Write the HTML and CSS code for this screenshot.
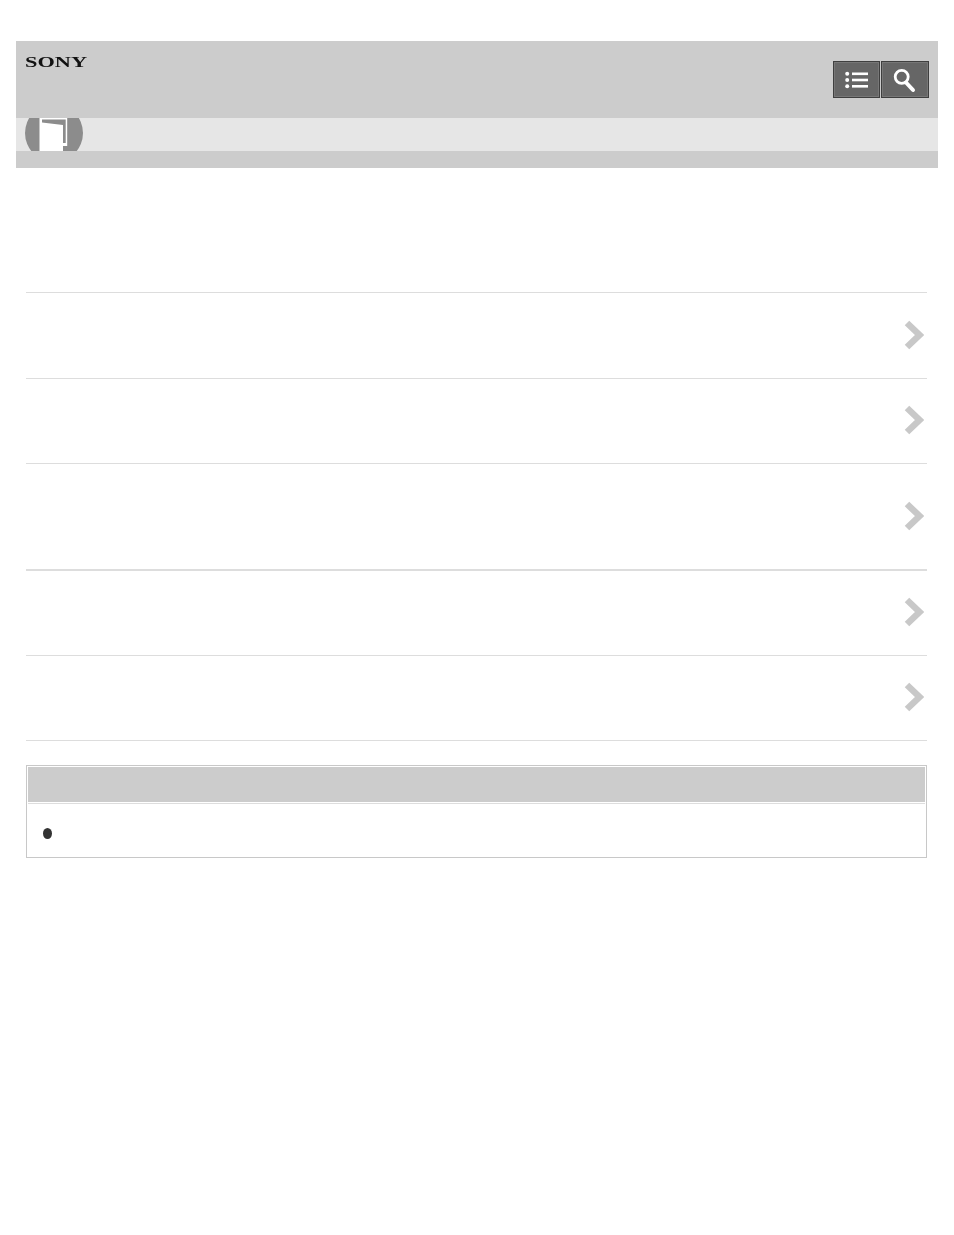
FILE: index.html
```html
<!DOCTYPE html>
<html lang="en">
<head>
<meta charset="utf-8">
<title>Help Guide</title>
<link rel="stylesheet" href="styles.css">
</head>
<body>
<header class="site-header">
  <div class="top-bar">
    <span class="logo">SONY</span>
    <div class="tools">
      <button class="tool" aria-label="Contents">
        <svg width="24" height="18" viewBox="0 0 24 18"><g fill="#fff"><circle cx="2.200" cy="2.800" r="2"/><circle cx="2.200" cy="9" r="2"/><circle cx="2.200" cy="15.300" r="2"/><rect x="7" y="1.500" width="16" height="2.600"/><rect x="7" y="7.700" width="16" height="2.600"/><rect x="7" y="14" width="16" height="2.600"/></g></svg>
      </button>
      <button class="tool tool-wide" aria-label="Search">
        <svg width="24" height="26" viewBox="0 0 24 26"><circle cx="8.700" cy="9.800" r="6.500" fill="none" stroke="#fff" stroke-width="2.800"/><path d="M13 15.500l7 7.500" stroke="#fff" stroke-width="4" stroke-linecap="round"/></svg>
      </button>
    </div>
  </div>
  <div class="title-strip">
    <svg class="badge" width="58" height="33" viewBox="0 0 58 33"><circle cx="29" cy="15" r="29" fill="#8c8c8c"/><path d="M14.500 0H42.200V28H38V33H14.500Z" fill="#fff"/><path d="M17 1.500H40.700V25H38V7L17 4.500Z" fill="#8c8c8c"/></svg>
  </div>
  <div class="bottom-bar"></div>
</header>

<main class="content">
  <ul class="links">
    <li class="row row-first"><svg class="chev" width="20" height="30" viewBox="0 0 20 30"><path d="M3 3l12.500 12L3 27" fill="none" stroke="#c8c8c8" stroke-width="6.500"/></svg></li>
    <li class="row"><svg class="chev" width="20" height="30" viewBox="0 0 20 30"><path d="M3 3l12.500 12L3 27" fill="none" stroke="#c8c8c8" stroke-width="6.500"/></svg></li>
    <li class="row row-tall"><svg class="chev" width="20" height="30" viewBox="0 0 20 30"><path d="M3 3l12.500 12L3 27" fill="none" stroke="#c8c8c8" stroke-width="6.500"/></svg></li>
    <li class="row"><svg class="chev" width="20" height="30" viewBox="0 0 20 30"><path d="M3 3l12.500 12L3 27" fill="none" stroke="#c8c8c8" stroke-width="6.500"/></svg></li>
    <li class="row"><svg class="chev" width="20" height="30" viewBox="0 0 20 30"><path d="M3 3l12.500 12L3 27" fill="none" stroke="#c8c8c8" stroke-width="6.500"/></svg></li>
  </ul>

  <section class="note">
    <div class="note-head"></div>
    <div class="note-body"><span class="dot"></span></div>
  </section>
</main>
</body>
</html>
```
FILE: styles.css
```css
* { box-sizing: border-box; }
html, body { margin: 0; padding: 0; background: #fff; }
body { padding: 41px 16px 0; font-family: "Liberation Sans", Arial, sans-serif; }

.site-header { width: 922px; background: #ccc; }
.top-bar { height: 77px; display: flex; justify-content: space-between; padding: 20px 9px 0 9px; }
.logo {
  font-family: "Liberation Serif", serif;
  font-weight: 700;
  font-size: 15.500px;
  line-height: 1;
  color: #111;
  display: inline-block;
  transform: scaleX(1.44);
  transform-origin: left top;
  will-change: transform;
  height: 15px;
  margin-top: -7px;
}
.tools { display: flex; gap: 1px; height: 37px; }
.tool {
  width: 47px;
  height: 37px;
  padding: 0;
  display: flex;
  align-items: center;
  justify-content: center;
  background: #666;
  border: 1px solid #3f3f3f;
  box-shadow: inset 0 0 0 1px #777;
}
.tool-wide { width: 48px; }
.title-strip { height: 33px; background: #e6e6e6; padding-left: 9px; }
.badge { display: block; }
.bottom-bar { height: 17px; }

.content { padding: 124px 11px 0 10px; }
.links { list-style: none; margin: 0; padding: 0; border-top: 1px solid #ddd; }
.row {
  height: 85px;
  border-bottom: 1px solid #ddd;
  display: flex;
  align-items: center;
  justify-content: flex-end;
  padding: 0 3px 3px 0;
}
.row-first { height: 86px; padding-bottom: 1px; }
.row-tall { height: 107px; border-bottom-width: 2px; padding-bottom: 1px; }
.chev { display: block; }

.note { margin-top: 24px; height: 93px; border: 1px solid #c8c8c8; padding: 1px; }
.note-head { height: 35px; background: #ccc; }
.note-body { border-top: 1px solid #ddd; margin-top: 1px; padding: 24px 0 0 15px; }
.dot { display: block; width: 9px; height: 11px; border-radius: 50%; background: #333; }
```
